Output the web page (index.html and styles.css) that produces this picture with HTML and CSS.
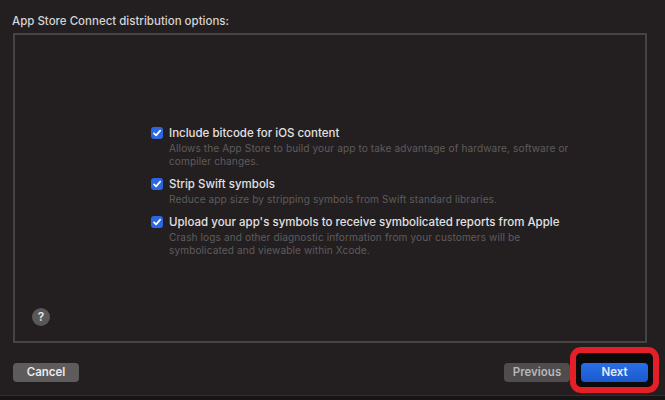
FILE: index.html
```html
<!DOCTYPE html>
<html>
<head>
<meta charset="utf-8">
<link rel="stylesheet" href="styles.css">
</head>
<body>
<div class="sheet">
  <div class="title">App Store Connect distribution options:</div>
  <div class="panel">
    <div class="options">
      <div class="option">
        <span class="check"><svg viewBox="0 0 12 12" width="12" height="12"><path d="M3 6.3 L5.1 8.4 L9.2 3.6" fill="none" stroke="#fff" stroke-width="1.7" stroke-linecap="round" stroke-linejoin="round"/></svg></span>
        <div class="text">
          <div class="label">Include bitcode for iOS content</div>
          <div class="desc">Allows the App Store to build your app to take advantage of hardware, software or<br>compiler changes.</div>
        </div>
      </div>
      <div class="option">
        <span class="check"><svg viewBox="0 0 12 12" width="12" height="12"><path d="M3 6.3 L5.1 8.4 L9.2 3.6" fill="none" stroke="#fff" stroke-width="1.7" stroke-linecap="round" stroke-linejoin="round"/></svg></span>
        <div class="text">
          <div class="label">Strip Swift symbols</div>
          <div class="desc">Reduce app size by stripping symbols from Swift standard libraries.</div>
        </div>
      </div>
      <div class="option">
        <span class="check"><svg viewBox="0 0 12 12" width="12" height="12"><path d="M3 6.3 L5.1 8.4 L9.2 3.6" fill="none" stroke="#fff" stroke-width="1.7" stroke-linecap="round" stroke-linejoin="round"/></svg></span>
        <div class="text">
          <div class="label">Upload your app's symbols to receive symbolicated reports from Apple</div>
          <div class="desc">Crash logs and other diagnostic information from your customers will be<br>symbolicated and viewable within Xcode.</div>
        </div>
      </div>
    </div>
    <div class="help">?</div>
  </div>
  <div class="footer">
    <div class="btn cancel">Cancel</div>
    <div class="right">
      <div class="btn prev">Previous</div>
      <div class="next-wrap">
        <span class="highlight"></span>
        <div class="btn next">Next</div>
      </div>
    </div>
  </div>
</div>
</body>
</html>
```
FILE: styles.css
```css
html { background: #171415; }
body {
  margin: 0;
  font-family: "Inter", "Liberation Sans", sans-serif;
}
.sheet {
  width: 665px;
  height: 396px;
  box-sizing: border-box;
  background: #231f20;
  border-bottom: 1px solid #3a2c2b;
  padding: 13px 17px 0 13px;
  display: flex;
  flex-direction: column;
}
.title {
  color: #d5d3d4;
  font-size: 11.5px;
  font-weight: 500;
  line-height: 14px;
  margin-left: -1px;
  padding-top: 1px;
  height: 19px;
}
.panel {
  width: 634px;
  height: 310px;
  box-sizing: border-box;
  border: 2px solid #464344;
  display: flex;
  flex-direction: column;
  padding: 91px 0 15px 136px;
}
.options {
  display: flex;
  flex-direction: column;
  gap: 9px;
}
.option {
  display: flex;
  align-items: flex-start;
  gap: 6px;
}
.check {
  width: 12px;
  height: 12px;
  border-radius: 3px;
  background: #2b67e0;
  margin-top: 1px;
  display: flex;
  flex-shrink: 0;
}
.text {
  width: 430px;
}
.label {
  color: #e2e1e1;
  font-size: 11.5px;
  font-weight: 500;
  line-height: 15px;
  white-space: nowrap;
}
.desc {
  color: #5e5b5c;
  font-size: 10.1px;
  letter-spacing: 0.1px;
  line-height: 13px;
  margin-top: 1px;
  white-space: nowrap;
}
.help {
  margin-top: auto;
  margin-left: -119px;
  width: 18px;
  height: 18px;
  border-radius: 50%;
  background: #5a5758;
  color: #e6e5e5;
  font-size: 12px;
  font-weight: 600;
  line-height: 18px;
  text-align: center;
}
.footer {
  margin-top: 20px;
  display: flex;
  justify-content: space-between;
  align-items: flex-start;
}
.right {
  display: flex;
  gap: 11px;
}
.btn {
  height: 19px;
  width: 66px;
  border-radius: 4px;
  font-size: 11.5px;
  font-weight: 600;
  line-height: 19px;
  text-align: center;
}
.cancel {
  background: #5d5b5c;
  color: #ebeaea;
}
.prev {
  background: #4e4c4d;
  color: #b9b7b8;
}
.next-wrap {
  position: relative;
}
.next {
  position: relative;
  width: 67px;
  background: linear-gradient(#2a6ee6, #1b5acc);
  color: #e4eaf7;
}
.highlight {
  position: absolute;
  left: -11px;
  right: -11px;
  top: -16px;
  bottom: -11px;
  border: 6px solid #e41f27;
  border-radius: 11px;
  background: #0c0a0b;
}
```
